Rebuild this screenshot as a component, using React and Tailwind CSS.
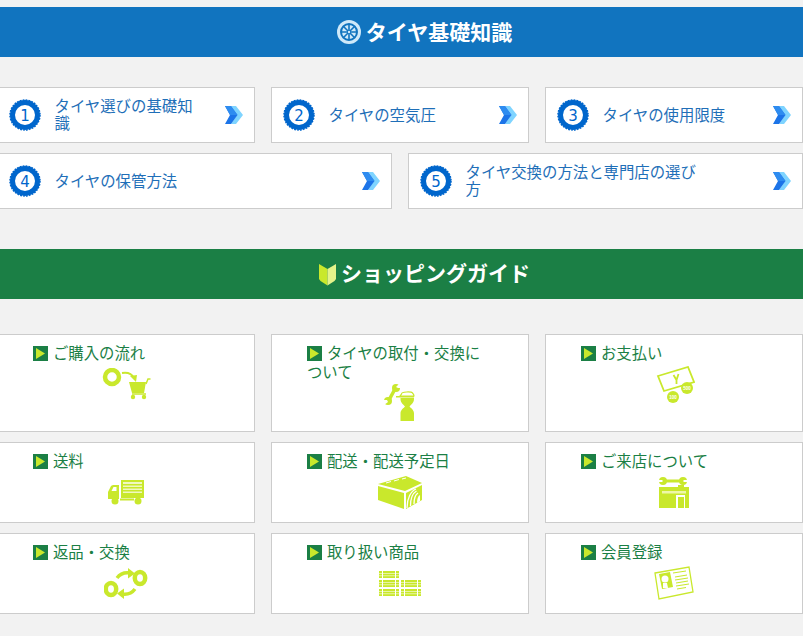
const L = "#c9e82c";

function Wheel() {
  return (
    <svg width="24" height="24" viewBox="0 0 24 24" className="shrink-0">
      <circle cx="12" cy="12" r="12" fill="#cfe9f9" />
      <circle cx="12" cy="12" r="8" fill="none" stroke="#1174bf" strokeWidth="2" />
      <circle cx="12" cy="12" r="2" fill="#1174bf" />
      <g stroke="#1174bf" strokeWidth="1.6">
        <path d="M12 4v16M4 12h16M6.3 6.3l11.4 11.4M17.7 6.3L6.3 17.7" />
      </g>
      <circle cx="12" cy="12" r="1.2" fill="#cfe9f9" />
    </svg>
  );
}

function Leaf() {
  return (
    <svg width="17" height="23" viewBox="0 0 17 23" className="shrink-0">
      <path d="M0 1l8.5 5v16.5L1.5 18 0 16z" fill={L} />
      <path d="M17 1l-8.5 5v16.5l7-4.5 1.500-2z" fill="#e4f38a" />
    </svg>
  );
}

function Badge({ n }) {
  return (
    <svg width="32" height="32" viewBox="0 0 32 32" className="shrink-0">
      <circle cx="16" cy="16" r="14" fill="#fff" />
      <circle cx="16" cy="16" r="12.500" fill="none" stroke="#0066cc" strokeWidth="5" />
      <circle cx="16" cy="16" r="15" fill="none" stroke="#0066cc" strokeWidth="1.500" strokeDasharray="1.800 1.150" />
      <text x="16" y="21.500" textAnchor="middle" fontSize="15" fontWeight="500" fill="#0066cc" fontFamily="'DejaVu Sans', sans-serif">{n}</text>
    </svg>
  );
}

function Chevron() {
  return (
    <svg width="18" height="18" viewBox="0 0 18 18" className="shrink-0">
      <path d="M6 0h5l7 9-7 9H6l6-9z" fill="#7fd4ff" />
      <path d="M0 0h6l6.500 9L6 18H0l5-9z" fill="#1c74e8" />
      <path d="M0 0h6l6.500 9H5z" fill="#2e8cf0" />
    </svg>
  );
}

function Cart() {
  return (
    <svg width="50" height="33" viewBox="-2 0 50 33">
      <circle cx="9" cy="9" r="7" fill="none" stroke={L} strokeWidth="4.500" />
      <path d="M19 5c6-1 10 1 12 5" fill="none" stroke={L} strokeWidth="1.800" />
      <path d="M27 8l7-1-1 7z" fill={L} />
      <path d="M26 14h17l-2 11H29z" fill={L} />
      <path d="M43 16l2-5h2.500M29 26h14" stroke={L} strokeWidth="1.500" fill="none" />
      <circle cx="30" cy="29" r="2.200" fill={L} />
      <circle cx="41" cy="29" r="2.200" fill={L} />
    </svg>
  );
}

function Tools() {
  return (
    <svg width="32" height="38" viewBox="0 0 32 38">
      <path d="M11 5L5 16" stroke={L} strokeWidth="3.500" />
      <circle cx="12" cy="4" r="4" fill={L} />
      <circle cx="4" cy="17" r="4" fill={L} />
      <path d="M12 3l3-3h2v4h-3z" fill="#fff" />
      <path d="M4 18L0 21v-5l3 0z" fill="#fff" />
      <path d="M17.500 10c0-2.500 10-2.500 11-1 1 1 1.500 2 1.500 3H16z" fill="none" stroke={L} strokeWidth="1.200" />
      <rect x="12" y="12" width="18" height="1.500" fill={L} />
      <path d="M16.500 14h13.500v1c0 4-3.500 6-4.500 7.500 1 1.500 4.500 3 4.500 7V37H16.500v-7.500c0-4 3.500-5.500 4.500-7-1-1.500-4.500-3.500-4.500-7.500z" fill={L} />
    </svg>
  );
}

function Money() {
  return (
    <svg width="42" height="37" viewBox="-4 0 42 37">
      <path d="M1 10L31 1l6 15-30 9z" fill="#fff" stroke={L} strokeWidth="1.800" />
      <path d="M16.500 9l3 5 2-6M19.500 14v4" stroke={L} strokeWidth="1.800" fill="none" />
      <circle cx="30" cy="22" r="6" fill={L} />
      <circle cx="16" cy="31" r="6" fill={L} />
      <text x="30" y="23.500" textAnchor="middle" fontSize="4.500" fontWeight="700" fill="#fff" fontFamily="'Liberation Sans', sans-serif">500</text>
      <text x="16" y="32.500" textAnchor="middle" fontSize="4.500" fontWeight="700" fill="#fff" fontFamily="'Liberation Sans', sans-serif">100</text>
    </svg>
  );
}

function Truck() {
  return (
    <svg width="36" height="25" viewBox="0 0 36 25">
      <path d="M13 0h23v18H13z" fill={L} />
      <path d="M15 2h19v2H15zM15 5.500h19v1.500H15zM15 8.500h19v1.500H15zM15 11.500h19v1.500H15z" fill="#f0f8c0" />
      <path d="M0 12l3-6c1-1 2-1 3-1h5v14H0z" fill={L} />
      <path d="M3.500 11l2-4h3v4z" fill="#fff" />
      <circle cx="7" cy="21" r="3.500" fill={L} />
      <circle cx="30" cy="21" r="3.500" fill={L} />
      <rect x="12" y="18.500" width="14" height="2" fill={L} />
    </svg>
  );
}

function Box() {
  return (
    <svg width="44" height="33" viewBox="0 0 44 33">
      <path d="M0 8L28 0l16 7-17 8z" fill={L} />
      <path d="M0 10l26 7v16L0 24z" fill={L} />
      <path d="M28 17l16-8v15l-16 9z" fill={L} />
      <path d="M8 7l5-1.500M16 5l5-1.500M24 3l4-1" stroke="#fff" strokeWidth="1" />
      <path d="M29 32c0-10 4-17 9-19M32.500 30c0-8 2.500-13 6-15M36 28c0-5 1-9 4-11" stroke="#fff" strokeWidth="1.300" fill="none" />
      <path d="M39 27c0-4 1-7 3-8v6z" fill="#fff" />
    </svg>
  );
}

function Shop() {
  return (
    <svg width="30" height="31" viewBox="0 0 30 31">
      <rect x="4" y="2.500" width="20" height="3" fill={L} />
      <circle cx="4" cy="4" r="4" fill={L} />
      <circle cx="24" cy="4" r="4" fill={L} />
      <path d="M0 4h3.500M24.500 4H28" stroke="#fff" strokeWidth="2" />
      <rect x="19" y="8" width="6" height="2" fill={L} />
      <path d="M0 10h30v21H0z" fill={L} />
      <rect x="3" y="14" width="24" height="2.500" fill="#eef7a8" />
      <rect x="17" y="18" width="9" height="13" fill="#fff" />
      <rect x="19" y="20" width="6" height="11" fill={L} />
    </svg>
  );
}

function Cycle() {
  return (
    <svg width="44" height="31" viewBox="0 0 44 31">
      <ellipse cx="7" cy="21" rx="5.200" ry="6" fill="none" stroke={L} strokeWidth="4.500" />
      <ellipse cx="36" cy="10" rx="5.200" ry="6" fill="none" stroke={L} strokeWidth="4.500" />
      <path d="M13 10c3-4 7-6 13-5" fill="none" stroke={L} strokeWidth="3.500" />
      <path d="M24 0l7 5.500-7 5z" fill={L} />
      <path d="M31 21c-3 4-7 6-13 5" fill="none" stroke={L} strokeWidth="3.500" />
      <path d="M20 31l-7-5.500 7-5z" fill={L} />
    </svg>
  );
}

function Shelf() {
  const blocks = [
    [0, 0],
    [0, 9],
    [22, 9],
    [0, 18],
    [22, 18],
  ];
  return (
    <svg width="43" height="25" viewBox="0 0 43 25">
      {blocks.map(([x, y]) => (
        <g key={x + "-" + y}>
          <rect x={x} y={y} width="20" height="7" fill={L} />
          <rect x={x} y={y + 2} width="20" height=".8" fill="#fff" opacity=".7" />
          <rect x={x} y={y + 4.4} width="20" height=".8" fill="#fff" opacity=".7" />
          <rect x={x + 3} y={y} width="1" height="7" fill="#fff" />
          <rect x={x + 16} y={y} width="1" height="7" fill="#fff" />
        </g>
      ))}
    </svg>
  );
}

function Member() {
  return (
    <svg width="40" height="34" viewBox="0 0 40 34">
      <path d="M1 7L35 1l4 25-34 7z" fill="#fff" stroke={L} strokeWidth="1.300" />
      <path d="M5 8l11-2 3 15-11 2z" fill={L} />
      <circle cx="11" cy="13" r="3.500" fill="#fff" />
      <path d="M9 17h4l1 5H9z" fill="#fff" />
      <path d="M19 7l13-2M21 11l12-2M21 14l13-2M22 17l12-2M22 20l13-2M23 23l9-1.500" stroke={L} strokeWidth="1" />
    </svg>
  );
}

function BlueCard({ n, text, textClass }) {
  return (
    <div className="flex h-[56px] items-center border border-[#cccccc] bg-white pl-[10.5px] pr-[11px]">
      <Badge n={n} />
      <div className={"mb-[2px] ml-[14px] text-[15.4px] leading-[17px] text-[#1f6fb8] " + textClass}>{text}</div>
      <div className="ml-auto">
        <Chevron />
      </div>
    </div>
  );
}

function GreenCard({ text, icon }) {
  return (
    <div className="flex min-h-[81px] flex-col border border-[#cccccc] bg-white px-[35px] pt-[8px] pb-[7px]">
      <div className="text-[15.36px] leading-[19px] text-[#1b7f45]">
        <span className="mr-[5px] inline-flex h-[15px] w-[15px] items-center justify-center bg-[#1b7f45] align-[0px]">
          <svg width="9" height="11" viewBox="0 0 9 11">
            <path d="M0 0l9 5.500L0 11z" fill={L} />
          </svg>
        </span>
        {text}
      </div>
      <div className="mt-[1px] flex h-[42px] items-center justify-center">{icon}</div>
    </div>
  );
}

export default function App() {
  return (
    <div className="min-h-[636px] overflow-hidden bg-[#f2f2f2] pt-[7px] font-['Noto_Sans_CJK_JP','Noto_Sans',sans-serif]">
      <div className="flex h-[50px] items-center justify-center gap-[5px] bg-[#1174bf] pl-[46px]">
        <Wheel />
        <h2 className="text-[21px] font-bold text-white">タイヤ基礎知識</h2>
      </div>

      <div className="mt-[30px] ml-[-3px] flex w-[806px] flex-col gap-[10px]">
        <div className="grid grid-cols-3 gap-4">
          <BlueCard n="1" text="タイヤ選びの基礎知識" textClass="w-[150px]" />
          <BlueCard n="2" text="タイヤの空気圧" textClass="w-[150px]" />
          <BlueCard n="3" text="タイヤの使用限度" textClass="w-[150px]" />
        </div>
        <div className="grid grid-cols-2 gap-4">
          <BlueCard n="4" text="タイヤの保管方法" textClass="w-[240px]" />
          <BlueCard n="5" text="タイヤ交換の方法と専門店の選び方" textClass="w-[240px]" />
        </div>
      </div>

      <div className="mt-[40px] flex h-[50px] items-center justify-center gap-[5px] bg-[#1b7f45] pl-[46px]">
        <Leaf />
        <h2 className="pb-[2px] text-[21px] font-bold text-white">ショッピングガイド</h2>
      </div>

      <div className="mt-[35px] ml-[-3px] grid w-[806px] grid-cols-3 gap-x-4 gap-y-[10px]">
        <GreenCard text="ご購入の流れ" icon={<Cart />} />
        <GreenCard text="タイヤの取付・交換について" icon={<Tools />} />
        <GreenCard text="お支払い" icon={<Money />} />
        <GreenCard text="送料" icon={<Truck />} />
        <GreenCard text="配送・配送予定日" icon={<Box />} />
        <GreenCard text="ご来店について" icon={<Shop />} />
        <GreenCard text="返品・交換" icon={<Cycle />} />
        <GreenCard text="取り扱い商品" icon={<Shelf />} />
        <GreenCard text="会員登録" icon={<Member />} />
      </div>
    </div>
  );
}
